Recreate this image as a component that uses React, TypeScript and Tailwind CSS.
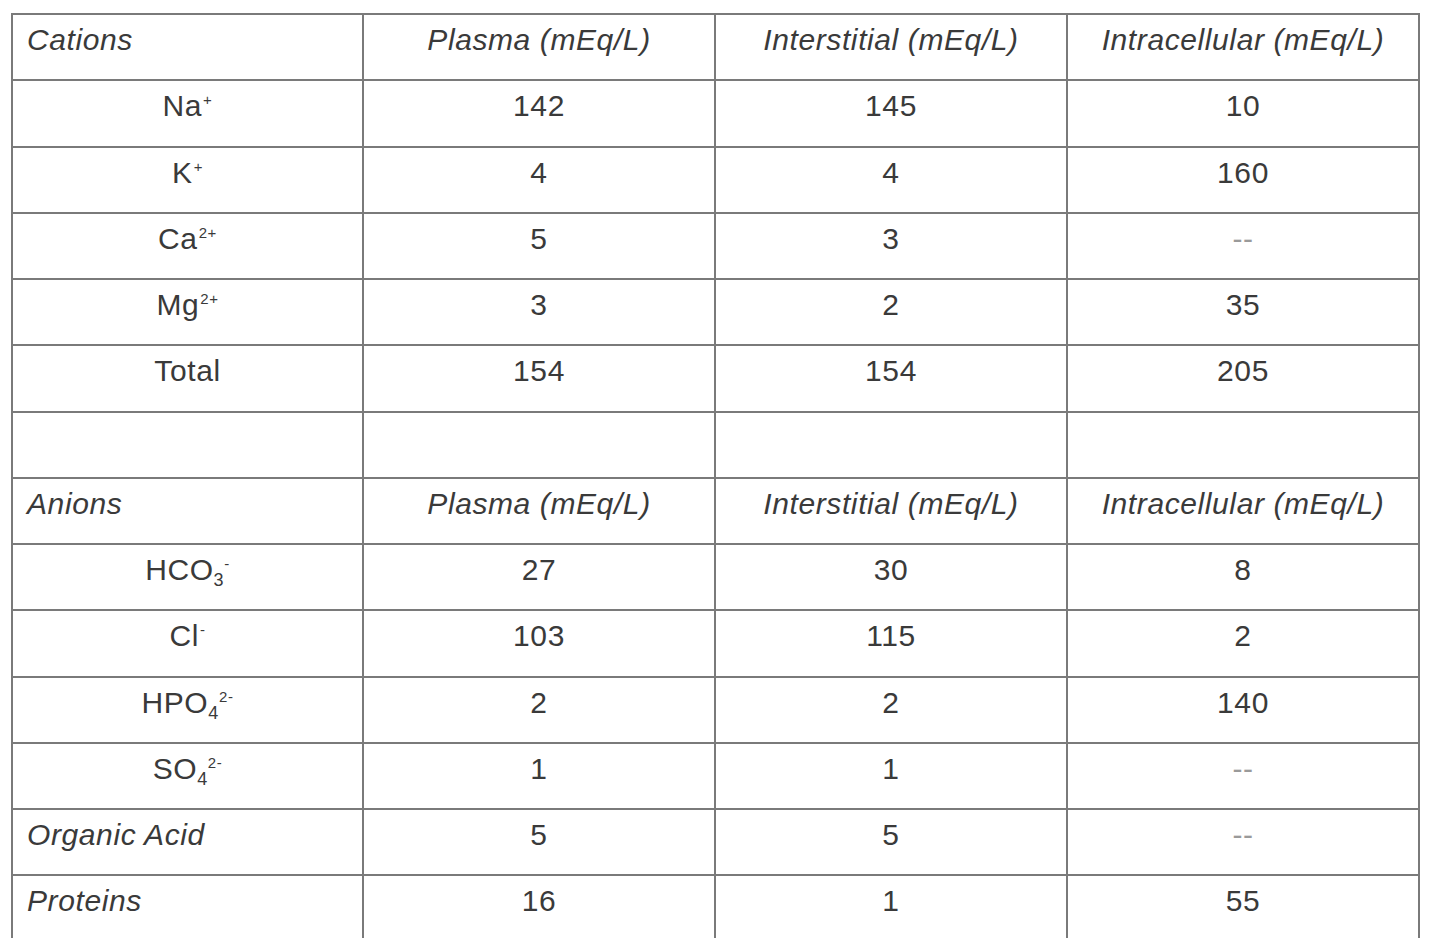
import React from "react";

type Cell = React.ReactNode;

const Sup = ({ children }: { children: React.ReactNode }) => (
  <span className="relative -top-[11px] ml-[1px] text-[15px]">{children}</span>
);

const SubSup = ({ sub, sup }: { sub: string; sup: string }) => (
  <>
    <span className="relative top-[6px] text-[18px]">{sub}</span>
    <span className="relative -top-[11px] text-[15px]">{sup}</span>
  </>
);

const dash = <span className="text-[#9a9a9a]">--</span>;

const rows: { cells: Cell[]; header?: boolean; italicFirst?: boolean }[] = [
  {
    header: true,
    cells: ["Cations", "Plasma (mEq/L)", "Interstitial (mEq/L)", "Intracellular (mEq/L)"],
  },
  { cells: [<>Na<Sup>+</Sup></>, "142", "145", "10"] },
  { cells: [<>K<Sup>+</Sup></>, "4", "4", "160"] },
  { cells: [<>Ca<Sup>2+</Sup></>, "5", "3", dash] },
  { cells: [<>Mg<Sup>2+</Sup></>, "3", "2", "35"] },
  { cells: ["Total", "154", "154", "205"] },
  { cells: ["", "", "", ""] },
  {
    header: true,
    cells: ["Anions", "Plasma (mEq/L)", "Interstitial (mEq/L)", "Intracellular (mEq/L)"],
  },
  { cells: [<>HCO<SubSup sub="3" sup="-" /></>, "27", "30", "8"] },
  { cells: [<>Cl<Sup>-</Sup></>, "103", "115", "2"] },
  { cells: [<>HPO<SubSup sub="4" sup="2-" /></>, "2", "2", "140"] },
  { cells: [<>SO<SubSup sub="4" sup="2-" /></>, "1", "1", dash] },
  { italicFirst: true, cells: ["Organic Acid", "5", "5", dash] },
  { italicFirst: true, cells: ["Proteins", "16", "1", "55"] },
];

export default function App() {
  return (
    <div
      className="min-h-screen bg-white pl-[11px] pt-[13px] text-[30px] tracking-[0.6px] text-[#3a3a3a]"
      style={{ fontFamily: '"Liberation Sans", Arial, sans-serif' }}
    >
      <div className="w-[1409px] border-t-2 border-l-2 border-[#7a7a7a]">
        {rows.map((row, i) => (
          <div key={i} className="grid h-[66.25px] grid-cols-[351px_352px_352px_352px]">
            {row.cells.map((c, j) => {
              const leftLabel = j === 0 && (row.header || row.italicFirst);
              return (
                <div
                  key={j}
                  className={[
                    "flex items-center whitespace-nowrap border-r-2 border-b-2 border-[#7a7a7a] pb-[14px] leading-none",
                    leftLabel ? "justify-start pl-[14px] italic" : "justify-center",
                    row.header && j > 0 ? "italic" : "",
                  ].join(" ")}
                >
                  <span>{c}</span>
                </div>
              );
            })}
          </div>
        ))}
      </div>
    </div>
  );
}
